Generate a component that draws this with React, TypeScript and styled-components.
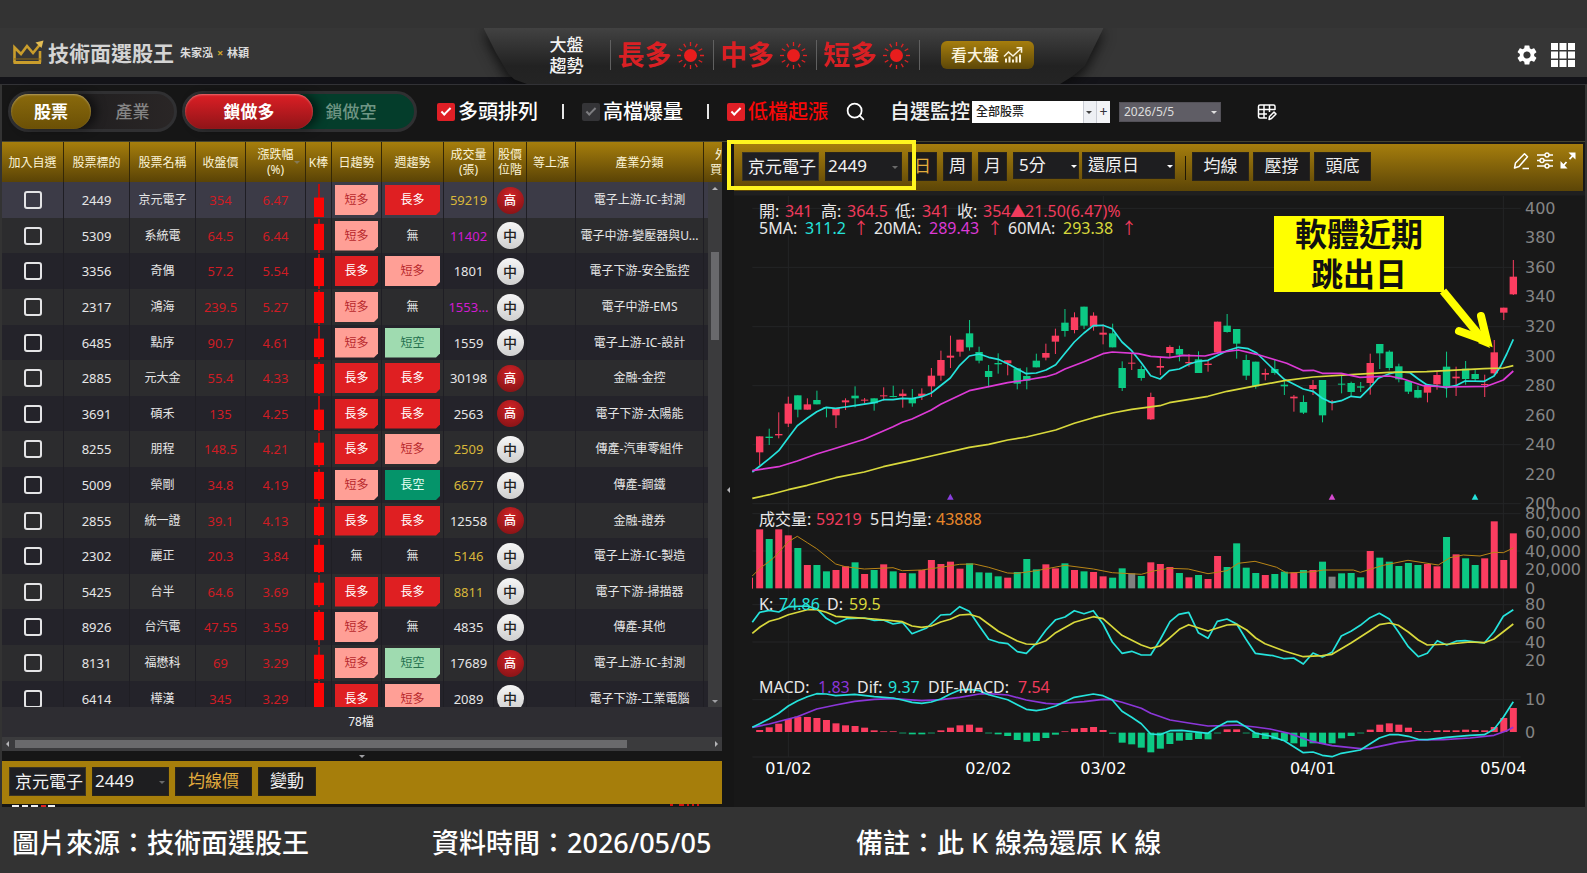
import React from "react";
import styled, { createGlobalStyle, css } from "styled-components";
import { MdSettings } from "react-icons/md";
import { Search } from "lucide-react";

const sans = `"Noto Sans", "Noto Sans CJK TC", sans-serif`;

const GlobalStyle = createGlobalStyle`
  *, *::before, *::after { box-sizing: border-box; }
  body {
    margin: 0;
    background: #333333;
    color: #f2f2f2;
    font-family: ${sans};
    font-size: 13px;
    line-height: 18px;
  }
  button, input, select { font-family: inherit; color: inherit; margin: 0; }
  button { cursor: pointer; }
`;

/* ---------- shell ---------- */

const Page = styled.div`
  padding-top: 28px;
`;

const Frame = styled.div`
  margin: 0 2px;
  background: #161616;
`;

const Header = styled.header`
  display: grid;
  grid-template-columns: 1fr auto 1fr;
  height: 56px;
  margin: 0 -2px;
  overflow: hidden;
  background: linear-gradient(#363636 49px, #131318 49px);
`;

const Brand = styled.div`
  display: flex;
  align-items: center;
  height: 49px;
  padding-left: 12px;
`;

const BrandTitle = styled.h1`
  margin: 0 6px 0 4px;
  font-size: 21px;
  line-height: 28px;
  font-weight: 700;
  color: #d4d4d4;
`;

const Authors = styled.span`
  font-size: 11px;
  font-weight: 700;
  color: #dcdcdc;
  i { font-style: normal; color: #cfa52a; padding: 0 1px; }
`;

const TabShadow = styled.div`
  filter: drop-shadow(0 4px 7px #0c0c0c);
`;

const MarketTab = styled.section`
  display: flex;
  align-items: center;
  width: 620px;
  height: 56px;
  padding: 0 0 2px 66px;
  background: linear-gradient(#424242, #222222 38px, #242424);
  clip-path: polygon(0 0, 100% 0, 97% 68%, 95% 86%, 93% 100%, 7% 100%, 5% 92%, 4% 82%, 2% 44%);
`;

const MarketLabel = styled.div`
  width: 60px;
  font-size: 17px;
  line-height: 21px;
  font-weight: 500;
  white-space: pre-line;
`;

const Trend = styled.div`
  display: flex;
  align-items: center;
  gap: 4px;
  width: 103px;
  height: 30px;
  padding-left: 7px;
  border-left: 1px solid #606060;
  font-size: 27px;
  line-height: 30px;
  font-weight: 700;
  color: #d92024;
`;

const TrendEnd = styled.div`
  width: 22px;
  height: 30px;
  border-left: 1px solid #606060;
`;

const MarketButton = styled.button`
  display: flex;
  align-items: center;
  justify-content: center;
  gap: 4px;
  width: 93px;
  height: 28px;
  padding: 0;
  border: 0;
  border-radius: 6px;
  background: linear-gradient(#a67e0d, #5d4708);
  color: #faf3dc;
  font-size: 16px;
  line-height: 24px;
  font-weight: 500;
`;

const HeaderTools = styled.div`
  display: flex;
  align-items: center;
  justify-content: flex-end;
  gap: 12px;
  height: 53px;
  padding-right: 12px;
`;

const IconButton = styled.button`
  display: flex;
  padding: 0;
  border: 0;
  background: none;
  color: #ffffff;
`;

/* ---------- filter bar ---------- */

const FilterBar = styled.div`
  display: flex;
  align-items: center;
  height: 58px;
  padding: 0 6px 3px;
  border-top: 1px solid #323236;
  border-bottom: 1px solid #45442f;
`;

const Toggle = styled.div<{ $bg: string; $w: number; $gap: number }>`
  display: flex;
  flex: none;
  width: ${(p) => p.$w}px;
  height: 41px;
  margin-right: ${(p) => p.$gap}px;
  padding: 0;
  border: 3px solid #303032;
  border-radius: 21px;
  background: ${(p) => p.$bg};
`;

const ToggleItem = styled.button<{ $w?: number; $fill?: string; $fg: string }>`
  flex: ${(p) => (p.$w ? `0 0 ${p.$w}px` : "1")};
  height: 35px;
  padding: 0;
  border: 0;
  border-radius: 18px;
  background: ${(p) => p.$fill ?? "none"};
  color: ${(p) => p.$fg};
  font-size: 17px;
  line-height: 24px;
  font-weight: ${(p) => (p.$fill ? 700 : 500)};
  ${(p) => p.$fill && css`box-shadow: inset 0 1px 2px rgba(255, 255, 255, 0.35), 6px 0 10px rgba(0, 0, 0, 0.5);`}
`;

const Check = styled.label<{ $color?: string }>`
  display: flex;
  align-items: center;
  gap: 3px;
  font-size: 20px;
  line-height: 28px;
  font-weight: 500;
  white-space: nowrap;
  color: ${(p) => p.$color ?? "#ffffff"};
`;

const CheckInput = styled.input`
  appearance: none;
  display: grid;
  place-items: center;
  width: 18px;
  height: 18px;
  border-radius: 2px;
  background: #343437;
  &:checked { background: #e01f26; }
  &::before {
    content: "";
    width: 10px;
    height: 5px;
    border: solid #7d7d80;
    border-width: 0 0 2px 2px;
    transform: translateY(-1px) rotate(-45deg);
  }
  &:checked::before { border-color: #ffffff; }
`;

const Bar = styled.span`
  width: 2px;
  height: 15px;
  margin: 0 18px 0 24px;
  background: #e6e6e6;
`;

const SearchButton = styled(IconButton)`
  margin: 0 24px 0 17px;
`;

const Watch = styled.label`
  font-size: 20px;
  line-height: 28px;
  font-weight: 500;
  white-space: nowrap;
`;

const WatchBox = styled.div`
  display: flex;
  width: 138px;
  height: 22px;
  margin: 0 9px 0 2px;
  background: #ffffff;
  color: #222222;
`;

const SelectWrap = styled.div<{ $w?: number; $h?: number; $arrow?: string; $right?: number }>`
  position: relative;
  display: flex;
  flex: ${(p) => (p.$w ? `0 0 ${p.$w}px` : "1")};
  height: ${(p) => p.$h ?? 22}px;
  &::after {
    content: "";
    position: absolute;
    right: ${(p) => p.$right ?? 4}px;
    top: 50%;
    margin-top: -1px;
    border: 3px solid transparent;
    border-top-color: ${(p) => p.$arrow ?? "#444444"};
    border-bottom: 0;
    pointer-events: none;
  }
`;

const PlainSelect = styled.select`
  appearance: none;
  width: 100%;
  height: 100%;
  padding: 0 14px 0 4px;
  border: 0;
  border-radius: 0;
  background: #ffffff linear-gradient(90deg, #c9ccd4 1px, #eef0f4 1px) right / 13px 100% no-repeat;
  font-size: 12px;
  font-weight: 500;
`;

const DateSelect = styled.select`
  appearance: none;
  width: 100%;
  height: 100%;
  padding: 0 14px 0 4px;
  border: 1px solid #535158;
  border-radius: 0;
  background: #5f5d65;
  color: #dddddd;
  font-size: 12px;
`;

const AddButton = styled.button`
  width: 14px;
  padding: 0;
  border: 0;
  border-left: 1px solid #c9ccd4;
  background: #f3f4f7;
  color: #33333b;
  font-size: 14px;
  line-height: 18px;
`;

const ColumnsButton = styled(IconButton)`
  margin-left: 36px;
`;

/* ---------- two panels ---------- */

const Panels = styled.main`
  display: grid;
  grid-template-columns: minmax(0, 720fr) 12px minmax(0, 851fr);
`;

const ListPanel = styled.section`
  display: flex;
  flex-direction: column;
  min-height: 0;
`;

const TableView = styled.div`
  position: relative;
  flex: 1 1 0;
  min-height: 200px;
  overflow: hidden;
`;

const StockTable = styled.table`
  width: 100%;
  table-layout: fixed;
  border-collapse: separate;
  border-spacing: 0;
`;

const Col = styled.col<{ $w?: number }>`
  width: ${(p) => (p.$w ? `${p.$w}px` : "auto")};
`;

const Th = styled.th<{ $clip?: boolean }>`
  position: relative;
  height: 40px;
  padding: 0;
  overflow: hidden;
  background: linear-gradient(#a67e0c, #5a4306);
  border-right: 1px solid #352806;
  color: #fbf3d6;
  font-size: 12px;
  line-height: 15px;
  font-weight: 400;
  white-space: pre-line;
  ${(p) => p.$clip && css`
    padding-left: 6px;
    border-right: 0;
    text-align: left;
    text-indent: 5px;
    text-overflow: clip;
  `}
`;

const SortMark = styled.span`
  position: absolute;
  right: 5px;
  top: 19px;
  border: 3px solid transparent;
  border-top-color: #857a58;
`;

const Row = styled.tr<{ $selected?: boolean }>`
  height: 36px;
  background: ${(p) => (p.$selected ? "#3c3b47" : "#24232a")};
  &:nth-child(even) { background: #2c2c2e; }
  &:nth-child(5n), &:nth-child(5n + 2) { height: 35px; }
`;

const Td = styled.td<{ $color?: string; $cjk?: boolean; $flush?: boolean }>`
  padding: 0;
  overflow: hidden;
  border-right: 1px solid ${(p) => (p.$flush ? "transparent" : "#1f1e24")};
  color: ${(p) => p.$color ?? "#e6e6e6"};
  font-size: ${(p) => (p.$cjk ? 12 : 13)}px;
  line-height: 18px;
  text-align: center;
  text-overflow: ellipsis;
  white-space: nowrap;
`;

const PickBox = styled.input`
  appearance: none;
  display: block;
  width: 18px;
  height: 18px;
  margin: 0 auto;
  border: 2px solid #e4e4e6;
  border-radius: 3px;
`;

const badgeTone: Record<string, [string, string]> = {
  長多: ["#df1f22", "#ffffff"],
  短多: ["#ff9f96", "#b8282c"],
  長空: ["#05946a", "#e6fff3"],
  短空: ["#9fdbb0", "#25704e"],
};

const Badge = styled.span<{ $kind: string; $w: number }>`
  display: block;
  width: ${(p) => p.$w}px;
  height: 30px;
  margin: 0 auto;
  background: ${(p) => badgeTone[p.$kind][0]};
  color: ${(p) => badgeTone[p.$kind][1]};
  font-size: 12px;
  line-height: 30px;
  clip-path: polygon(0 0, 100% 0, 100% 26px, calc(100% - 4px) 100%, 0 100%);
`;

const Level = styled.span<{ $high: boolean }>`
  display: block;
  width: 27px;
  height: 27px;
  margin: 0 auto;
  border-radius: 50%;
  background: ${(p) =>
    p.$high
      ? "radial-gradient(circle at 50% 30%, #d02226, #8c1417 80%)"
      : "linear-gradient(#f6f6f6, #cfcfcf)"};
  color: ${(p) => (p.$high ? "#ffffff" : "#222222")};
  font-size: ${(p) => (p.$high ? 12 : 14)}px;
  line-height: 27px;
  font-weight: 500;
`;

const VScroll = styled.div`
  position: absolute;
  top: 40px;
  right: 0;
  bottom: 0;
  display: flex;
  flex-direction: column;
  align-items: center;
  width: 14px;
  padding: 5px 0 4px;
  background: #3b3b3d;
`;

const VThumb = styled.div`
  width: 8px;
  height: 88px;
  margin: 62px 0 auto;
  background: #69696c;
`;

const Arrow = styled.span<{ $dir: "up" | "down" | "left" | "right" }>`
  flex: none;
  width: 0;
  height: 0;
  border: 3px solid transparent;
  ${(p) => p.$dir === "up" && css`border-top: 0; border-bottom-color: #b5b5b8;`}
  ${(p) => p.$dir === "down" && css`border-bottom: 0; border-top-color: #a0a0a4;`}
  ${(p) => p.$dir === "left" && css`border-left: 0; border-right-color: #b5b5b8;`}
  ${(p) => p.$dir === "right" && css`border-right: 0; border-left-color: #b5b5b8;`}
`;

const Count = styled.div`
  height: 30px;
  padding-right: 2px;
  background: #2e2d32;
  font-size: 12px;
  line-height: 30px;
  text-align: center;
`;

const HScroll = styled.div`
  display: flex;
  align-items: center;
  height: 14px;
  padding: 0 4px;
  background: #3b3b3d;
`;

const HThumb = styled.div`
  width: 86%;
  height: 8px;
  margin: 0 auto 0 6px;
  background: #6a6a6c;
`;

const Collapse = styled.div`
  display: grid;
  place-items: center;
  height: 10px;
`;

const DetailBar = styled.div`
  display: flex;
  align-items: center;
  gap: 6px;
  height: 43px;
  padding: 0 7px 2px;
  background: #a67e0b;
`;

const Peek = styled.div`
  display: flex;
  justify-content: space-between;
  height: 3px;
  padding: 0 22px 0 8px;
`;

const Splitter = styled.div`
  display: grid;
  place-items: center;
  padding-top: 30px;
`;

/* ---------- chart panel ---------- */

const ChartPanel = styled.section`
  min-width: 0;
  padding-top: 2px;
  background: #181818;
`;

const ChartBar = styled.div`
  display: flex;
  align-items: flex-start;
  gap: 6px;
  height: 47px;
  margin-right: 2px;
  padding: 8px 7px 0 8px;
  background: linear-gradient(#a67e0d, #5c4507);
`;

const Symbol = styled.div`
  position: relative;
  display: flex;
  gap: 6px;
`;

const Highlight = styled.div`
  position: absolute;
  inset: -12px -14px -9px -15px;
  border: 4px solid #fff51f;
  pointer-events: none;
`;

const NameInput = styled.input`
  width: 77px;
  height: 29px;
  padding: 0 0 2px 5px;
  border: 1px solid #3a3424;
  background: #1f1f22;
  font-size: 17px;
  line-height: 24px;
`;

const DarkSelect = styled.select<{ $pad?: number }>`
  appearance: none;
  width: 100%;
  height: 100%;
  padding: 0 14px 1px ${(p) => p.$pad ?? 6}px;
  border: 1px solid #29241a;
  border-radius: 0;
  background: #1e1e20;
  font-size: 17px;
  line-height: 24px;
`;

const ToolButton = styled.button<{ $w: number; $on?: boolean }>`
  width: ${(p) => p.$w}px;
  height: 29px;
  padding: 0 0 1px;
  border: 1px solid #29241a;
  background: #1c1b1c;
  color: ${(p) => (p.$on ? "#e2ac3c" : "#ececec")};
  font-size: 17px;
  line-height: 24px;
`;

const SelectPair = styled.div`
  display: flex;
  gap: 3px;
`;

const ToolSet = styled.div`
  display: flex;
  gap: 4px;
  padding-left: 7px;
  margin-left: 4px;
  background: linear-gradient(#201804, #201804) 0 4px / 1px 24px no-repeat;
`;

const ChartIcons = styled.div`
  display: flex;
  gap: 7px;
  margin-left: auto;
`;

const ChartSvg = styled.svg`
  display: block;
  width: 100%;
  height: auto;
`;

const AxisText = styled.text`
  font-family: "DejaVu Sans", sans-serif;
  font-size: 16px;
  fill: #858585;
`;

const DateText = styled(AxisText)`
  fill: #ffffff;
  text-anchor: middle;
`;

const LegendText = styled.text`
  font-family: ${sans};
  font-size: 16px;
`;

const CalloutText = styled.text`
  font-family: ${sans};
  font-size: 32px;
  font-weight: 700;
  text-anchor: middle;
  fill: #111111;
`;

const Caption = styled.footer`
  display: grid;
  grid-template-columns: 420fr 424fr 719fr;
  height: 66px;
  padding: 19px 12px 0;
  font-size: 27px;
  line-height: 34px;
  font-weight: 500;
  color: #ffffff;
  white-space: nowrap;
`;

/* ---------- icons ---------- */

const Crown = () => (
  <svg width="32" height="26" viewBox="0 0 32 26" fill="none" stroke="#c99d2c" strokeWidth="2.600">
    <path d="M2.5 22.5V7.500l6.500 6.500 6-8 6 7L28 4.500M28 11v11.500" />
    <path d="M2 19h27" strokeWidth="1" stroke="#8c6a16" />
    <path d="M23.500 2.500l8-2-2 7.500z" fill="#e3bd55" stroke="none" />
    <path d="M1.500 22.500h27.500" strokeWidth="3" />
  </svg>
);

const Sun = () => (
  <svg width="29" height="29" viewBox="-14.5 -14.5 29 29">
    <circle r="6.500" fill="#e81d1d" />
    {Array.from({ length: 12 }, (_, i) => (
      <path key={i} d="M0 -9.500V-13.500" stroke="#e02222" strokeWidth="1.300" transform={`rotate(${i * 30})`} />
    ))}
  </svg>
);

const TrendIcon = () => (
  <svg width="20" height="18" viewBox="0 0 20 18" fill="none" stroke="currentColor" strokeWidth="1.600">
    <path d="M1 10.500l4.500-4.500 4.500 4 7.500-7M13.500 1.800h5v5" />
    <path d="M3 16.500v-4M6.500 16.500v-6M10 16.500v-3M13.500 16.500v-6M17 16.500v-8" strokeWidth="2" />
  </svg>
);

const AppsIcon = () => (
  <svg width="24" height="24" viewBox="0 0 24 24" fill="currentColor">
    {[0, 1, 2].map((r) => [0, 1, 2].map((c) => <rect key={`${r}${c}`} x={c * 8.5} y={r * 8.5} width="7" height="7" />))}
  </svg>
);

const TableEditIcon = () => (
  <svg width="20" height="18" viewBox="0 0 20 18" fill="none" stroke="currentColor" strokeWidth="1.500" strokeLinejoin="round">
    <path d="M18 7V3.500a1.500 1.500 0 0 0-1.500-1.500H3a1.500 1.500 0 0 0-1.500 1.500v10A1.500 1.500 0 0 0 3 15h7M1.500 6.500H18M7 2v13M12.500 2v7M1.500 11H10" />
    <path d="M12 16.500l.5-3 4.500-4.500 2 2-4.500 4.500z" />
  </svg>
);

const PencilIcon = () => (
  <svg width="17" height="18" viewBox="0 0 17 18" fill="none" stroke="currentColor" strokeWidth="1.500" strokeLinejoin="round">
    <path d="M1.500 16l1-5L11.500 1.800l3 3L6 14.500z" />
    <path d="M9.500 16.500H16" />
  </svg>
);

const SlidersIcon = () => (
  <svg width="16" height="17" viewBox="0 0 16 17" fill="none" stroke="currentColor" strokeWidth="1.400">
    <path d="M0 3h8M12 3h4M0 8.500h3M7 8.500h9M0 14h8M12 14h4" />
    <circle cx="10" cy="3" r="2" />
    <circle cx="5" cy="8.500" r="2" />
    <circle cx="10" cy="14" r="2" />
  </svg>
);

const ExpandIcon = () => (
  <svg width="16" height="17" viewBox="0 0 16 17" fill="currentColor" stroke="currentColor">
    <path d="M8.500 0.500H15.500v7zM0.500 9V16.500h7z" stroke="none" />
    <path d="M13 3.500L9.500 7.200M6.500 10L3 13.800" strokeWidth="1.800" />
  </svg>
);

/* ---------- list data ---------- */

type Stock = {
  id: string; name: string; price: string; pct: string;
  bar: [number, number, number, number];
  day: string; week: string; vol: string; volColor?: string; level: string; sector: string;
};

const gold = "#d9b83a";
const violet = "#d21bd2";

const stocks: Stock[] = [
  { id: "2449", name: "京元電子", price: "354", pct: "6.47", bar: [1, 15, 35, 35], day: "短多", week: "長多", vol: "59219", volColor: gold, level: "高", sector: "電子上游-IC-封測" },
  { id: "5309", name: "系統電", price: "64.5", pct: "6.44", bar: [1, 6, 33, 36], day: "短多", week: "無", vol: "11402", volColor: violet, level: "中", sector: "電子中游-變壓器與U..." },
  { id: "3356", name: "奇偶", price: "57.2", pct: "5.54", bar: [0, 4, 33, 36], day: "長多", week: "短多", vol: "1801", level: "中", sector: "電子下游-安全監控" },
  { id: "2317", name: "鴻海", price: "239.5", pct: "5.27", bar: [0, 2, 34, 36], day: "短多", week: "無", vol: "1553...", volColor: violet, level: "中", sector: "電子中游-EMS" },
  { id: "6485", name: "點序", price: "90.7", pct: "4.61", bar: [1, 14, 33, 35], day: "短多", week: "短空", vol: "1559", level: "中", sector: "電子上游-IC-設計" },
  { id: "2885", name: "元大金", price: "55.4", pct: "4.33", bar: [1, 3, 33, 34], day: "長多", week: "長多", vol: "30198", level: "高", sector: "金融-金控" },
  { id: "3691", name: "碩禾", price: "135", pct: "4.25", bar: [0, 14, 35, 36], day: "長多", week: "長多", vol: "2563", level: "高", sector: "電子下游-太陽能" },
  { id: "8255", name: "朋程", price: "148.5", pct: "4.21", bar: [1, 11, 34, 36], day: "長多", week: "短多", vol: "2509", volColor: gold, level: "中", sector: "傳產-汽車零組件" },
  { id: "5009", name: "榮剛", price: "34.8", pct: "4.19", bar: [1, 4, 32, 34], day: "短多", week: "長空", vol: "6677", volColor: gold, level: "中", sector: "傳產-鋼鐵" },
  { id: "2855", name: "統一證", price: "39.1", pct: "4.13", bar: [0, 4, 33, 34], day: "長多", week: "長多", vol: "12558", level: "高", sector: "金融-證券" },
  { id: "2302", name: "麗正", price: "20.3", pct: "3.84", bar: [0, 6, 34, 35], day: "無", week: "無", vol: "5146", volColor: gold, level: "中", sector: "電子上游-IC-製造" },
  { id: "5425", name: "台半", price: "64.6", pct: "3.69", bar: [1, 9, 32, 34], day: "長多", week: "長多", vol: "8811", volColor: gold, level: "中", sector: "電子下游-掃描器" },
  { id: "8926", name: "台汽電", price: "47.55", pct: "3.59", bar: [0, 2, 31, 36], day: "短多", week: "無", vol: "4835", level: "中", sector: "傳產-其他" },
  { id: "8131", name: "福懋科", price: "69", pct: "3.29", bar: [1, 9, 34, 35], day: "短多", week: "短空", vol: "17689", level: "高", sector: "電子上游-IC-封測" },
  { id: "6414", name: "樺漢", price: "345", pct: "3.29", bar: [0, 2, 35, 36], day: "長多", week: "短多", vol: "2089", level: "中", sector: "電子下游-工業電腦" },
];

const columns: { label: string; w?: number }[] = [
  { label: "加入自選", w: 62 },
  { label: "股票標的", w: 66 },
  { label: "股票名稱", w: 66 },
  { label: "收盤價", w: 50 },
  { label: "漲跌幅\n(%)", w: 60 },
  { label: "K棒", w: 26 },
  { label: "日趨勢", w: 50 },
  { label: "週趨勢", w: 62 },
  { label: "成交量\n(張)", w: 50 },
  { label: "股價\n位階", w: 33 },
  { label: "等上漲", w: 49 },
  { label: "產業分類" },
  { label: "外\n買", w: 18 },
];

const Block = styled.svg`
  display: block;
  margin: 0 auto;
`;

const KBar = ({ v }: { v: Stock["bar"] }) => (
  <Block width="12" height="35" viewBox="0 0 12 36" preserveAspectRatio="none" fill="#fb0505">
    <rect x="5" y={v[0]} width="2" height={v[3] - v[0]} fill="#c00a0a" />
    <rect x="1" y={v[1]} width="10" height={v[2] - v[1]} />
  </Block>
);

const TrendCell = ({ kind, w }: { kind: string; w: number }) =>
  kind === "無" ? <>無</> : <Badge $kind={kind} $w={w}>{kind}</Badge>;

const red = "#cf1c24";

/* ---------- chart data ---------- */

// Plot units: three to a pixel, x and y measured from the plot origin.
const px = (x: number) => x / 3 + 6;
const top = (y: number) => (y - 33) / 3;
const low = (y: number) => y / 3 + 299;
const slot = (i: number) => px(59 + 28.62 * i);

const UP = "#fb3d60";
const DOWN = "#0cc984";

// up/down flag, body top, body bottom, high, low
const candles: [number, number, number, number, number][] = [
  [1, 769, 817, 769, 855], [0, 770, 774, 746, 795], [1, 762, 766, 697, 775], [1, 671, 731, 650, 741],
  [0, 646, 689, 646, 712], [1, 673, 689, 655, 689], [0, 660, 673, 632, 673], [0, 682, 685, 682, 712],
  [1, 684, 706, 684, 744], [1, 661, 667, 655, 690], [0, 647, 655, 619, 682], [1, 659, 661, 654, 670],
  [0, 655, 670, 655, 692], [1, 646, 649, 622, 662], [0, 648, 650, 617, 652], [1, 641, 648, 628, 683],
  [0, 654, 670, 627, 680], [1, 641, 648, 625, 660], [1, 587, 619, 564, 651], [1, 540, 587, 512, 602],
  [1, 527, 533, 467, 564], [1, 479, 515, 479, 530], [0, 460, 502, 420, 512], [0, 516, 542, 500, 550],
  [0, 573, 591, 555, 622], [0, 549, 553, 520, 581], [1, 541, 550, 541, 586], [0, 565, 611, 565, 628],
  [0, 588, 602, 562, 628], [0, 542, 562, 521, 562], [1, 519, 533, 491, 541], [1, 467, 485, 446, 522],
  [0, 428, 453, 387, 470], [1, 412, 450, 397, 460], [0, 380, 437, 380, 447], [1, 407, 440, 397, 452],
  [1, 458, 464, 433, 493], [0, 460, 502, 431, 502], [0, 564, 624, 544, 633], [1, 548, 551, 520, 570],
  [0, 567, 594, 557, 602], [1, 651, 718, 638, 720], [1, 558, 563, 530, 585], [1, 501, 519, 496, 532],
  [0, 507, 524, 497, 544], [1, 546, 550, 522, 560], [0, 538, 579, 514, 579], [1, 551, 555, 540, 575],
  [1, 425, 517, 425, 520], [0, 437, 456, 402, 458], [0, 447, 491, 447, 536], [0, 540, 587, 524, 600],
  [0, 545, 619, 545, 626], [1, 579, 584, 566, 601], [0, 567, 579, 538, 584], [0, 614, 619, 598, 645],
  [1, 650, 655, 645, 695], [0, 666, 698, 646, 702], [1, 615, 627, 600, 645], [0, 600, 706, 600, 727],
  [1, 664, 668, 660, 691], [0, 611, 614, 586, 640], [0, 609, 636, 605, 650], [0, 619, 623, 606, 636],
  [1, 549, 609, 521, 644], [0, 492, 520, 492, 567], [0, 515, 564, 511, 571], [0, 559, 598, 551, 607],
  [0, 603, 635, 600, 642], [0, 630, 653, 617, 655], [1, 616, 638, 616, 667], [1, 585, 613, 575, 629],
  [0, 560, 618, 515, 653], [1, 590, 595, 560, 648], [0, 566, 597, 543, 614], [0, 582, 597, 570, 603],
  [1, 612, 614, 584, 651], [1, 517, 580, 480, 585], [1, 383, 398, 383, 420], [1, 290, 343, 240, 345],
];

const volumeTops = [
  118, 147, 118, 136, 174, 225, 225, 244, 240, 229, 217, 252, 240, 223, 244, 249, 250, 240, 210, 222,
  215, 236, 220, 247, 248, 259, 263, 246, 207, 238, 223, 235, 220, 240, 244, 246, 259, 263, 235, 250,
  258, 217, 222, 231, 249, 262, 255, 267, 198, 231, 160, 233, 249, 255, 252, 245, 247, 240, 240, 215,
  260, 250, 249, 262, 183, 203, 215, 228, 219, 225, 222, 229, 141, 193, 205, 225, 205, 94, 210, 130,
];

const histogram = [
  6, 14, 25, 39, 46, 45, 42, 36, 26, 20, 18, 13, 5, 2, 2, -2, -5, -5, -2, 5,
  13, 20, 22, 13, -2, -5, -10, -22, -27, -25, -16, -6, 2, 10, 12, 15, 6, -3, -30, -35,
  -45, -59, -48, -34, -24, -22, -19, -20, -2, 8, 8, -2, -16, -19, -20, -25, -32, -42, -32, -34,
  -32, -17, -10, -2, 7, 22, 26, 22, 13, 3, 2, 5, 5, 5, 7, 6, 5, 15, 42, 72,
];

const flatDays = [39, 60];

const volumeColor = (i: number) => (flatDays.includes(i) ? "#808080" : candles[i][0] ? UP : DOWN);

const ma5 = "37,876 88,836 116,812 145,773 172,737 202,715 230,695 259,682 287,685 316,681 344,677 403,668 430,659 459,659 487,655 516,656 545,650 574,639 631,594 659,556 688,528 718,522 746,532 775,538 803,551 832,567 859,581 889,579 918,570 947,554 975,520 1003,486 1032,459 1060,437 1089,436 1117,446 1146,486 1175,512 1204,548 1232,587 1260,597 1288,572 1318,567 1346,553 1375,544 1404,541 1461,512 1495,502 1525,506 1550,519 1590,558 1633,598 1690,627 1719,634 1747,655 1776,668 1804,662 1833,649 1861,652 1890,623 1915,595 1948,581 1975,575 2010,578 2035,597 2060,614 2090,618 2118,623 2150,616 2175,603 2233,604 2262,588 2280,562 2300,522 2320,478";
const ma20 = "37,872 116,860 172,843 230,822 287,805 373,778 459,740 487,727 516,717 574,690 602,673 688,632 746,620 803,608 859,600 918,590 947,581 975,567 1032,545 1089,521 1117,516 1195,521 1232,529 1288,533 1330,526 1395,528 1440,517 1495,510 1550,523 1595,536 1640,550 1690,572 1720,571 1747,580 1804,580 1860,592 1948,588 1990,597 2050,617 2120,621 2240,619 2290,600 2320,573";
const ma60 = "37,955 88,944 145,929 202,916 287,893 373,876 430,860 516,841 574,828 688,802 746,793 803,780 859,771 947,750 1003,730 1060,713 1117,699 1175,688 1260,677 1288,668 1404,649 1461,634 1550,617 1633,602 1719,591 1833,584 1948,577 2060,575 2233,566 2290,564 2320,557";
const volMa = "37,258 60,235 100,205 145,155 172,139 202,158 230,176 287,222 316,230 373,237 459,233 487,242 545,240 602,232 659,223 703,222 746,232 803,249 832,250 889,242 975,226 1060,237 1117,248 1204,253 1240,243 1288,235 1345,237 1404,251 1461,242 1495,220 1545,214 1610,232 1640,249 1720,245 1750,240 1840,240 1861,247 1930,226 2004,211 2095,225 2130,203 2170,195 2220,198 2262,187 2290,188 2320,174";
const kLine = "37,397 59,367 88,361 116,366 145,350 202,348 230,356 259,385 287,401 320,386 373,384 403,391 430,390 459,402 487,397 516,431 560,414 602,375 631,373 659,350 688,364 718,408 746,448 775,457 803,461 832,485 859,490 889,460 918,420 947,389 975,381 1003,362 1032,371 1060,362 1089,402 1117,456 1146,490 1175,484 1204,495 1232,495 1260,450 1290,395 1316,373 1346,367 1375,428 1404,445 1432,394 1461,387 1490,402 1518,448 1546,490 1600,497 1633,506 1661,504 1690,522 1719,489 1747,501 1776,487 1804,438 1833,424 1861,406 1890,383 1918,370 1948,387 1975,425 2005,470 2035,500 2062,490 2092,452 2120,465 2150,453 2175,452 2233,459 2262,425 2290,379 2320,359";
const dLine = "37,430 60,411 88,394 116,386 145,374 202,359 230,359 259,367 287,379 344,383 403,387 487,395 516,408 545,412 574,408 602,396 631,388 659,375 688,373 718,382 775,424 832,453 859,462 889,463 918,452 947,428 1003,397 1060,380 1089,386 1146,436 1204,465 1232,475 1260,468 1290,443 1318,418 1346,404 1404,423 1461,405 1490,403 1520,420 1547,444 1575,461 1633,483 1690,500 1747,497 1776,493 1833,459 1918,404 1948,399 1975,406 2005,426 2035,450 2062,465 2130,462 2190,456 2233,458 2262,447 2320,402";
const dif = "37,712 59,701 88,686 116,670 145,648 172,633 202,620 230,611 259,612 287,617 344,613 403,620 459,624 487,630 516,637 545,640 574,636 602,627 631,612 659,600 688,598 718,602 746,614 803,629 832,644 859,658 889,662 918,657 947,648 1003,622 1060,612 1089,617 1117,630 1146,664 1175,682 1204,701 1232,732 1260,734 1290,722 1325,721 1404,730 1432,711 1461,695 1490,694 1520,712 1546,729 1590,738 1633,752 1690,788 1719,786 1747,796 1776,800 1804,790 1861,780 1918,744 1948,734 1975,734 2005,739 2035,748 2062,749 2120,742 2190,736 2233,734 2262,718 2290,682 2320,635";
const macd = "37,712 88,702 145,687 172,680 230,657 287,645 344,634 403,628 459,626 545,632 602,629 659,622 718,612 746,611 803,615 859,630 918,640 947,642 1032,635 1089,628 1117,629 1146,637 1204,655 1232,670 1290,690 1346,699 1404,708 1450,707 1490,705 1546,711 1590,717 1650,731 1719,755 1776,767 1861,776 1890,775 1975,757 2035,750 2110,749 2190,744 2262,736 2300,722 2320,712";

const trace = (points: string, y: (v: number) => number) =>
  points
    .split(" ")
    .map((p) => p.split(",").map(Number))
    .map(([a, b]) => `${px(a).toFixed(1)},${y(b).toFixed(1)}`)
    .join(" ");

const Line = ({ points, y, color, w = 1.7 }: { points: string; y: (v: number) => number; color: string; w?: number }) => (
  <polyline points={trace(points, y)} fill="none" stroke={color} strokeWidth={w} strokeLinejoin="round" />
);

const cyan = "#25e3dc";
const pink = "#dd3ad6";
const yellow = "#d8d83c";
const purple = "#8b36d8";
const white = "#e8e8e8";
const rose = "#f03b5c";

// y, then x / text / colour for each piece
const legends: { y: number; parts: [number, string, string][] }[] = [
  { y: 26, parts: [[25, "開:", white], [51, "341", rose], [87, "高:", white], [113, "364.5", rose], [161, "低:", white], [188, "341", rose], [223, "收:", white], [249, "354", rose], [276, "▲", rose], [291, "21.50(6.47)%", rose]] },
  { y: 43, parts: [[25, "5MA:", white], [71, "311.2", cyan], [119, "↑", rose], [140, "20MA:", white], [195, "289.43", pink], [253, "↑", rose], [274, "60MA:", white], [329, "293.38", yellow], [387, "↑", rose]] },
  { y: 334, parts: [[25, "成交量:", white], [82, "59219", rose], [136, "5日均量:", white], [202, "43888", "#e8872a"]] },
  { y: 419, parts: [[25, "K:", white], [45, "74.86", cyan], [93, "D:", white], [115, "59.5", yellow]] },
  { y: 502, parts: [[25, "MACD:", white], [84, "1.83", purple], [123, "Dif:", white], [154, "9.37", cyan], [194, "DIF-MACD:", white], [284, "7.54", rose]] },
];

const axis: [number, string][] = [
  ...Array.from({ length: 11 }, (_, i): [number, string] => [top(85 + i * 88.6), String(400 - i * 20)]),
  ...["80,000", "60,000", "40,000", "20,000", "0"].map((t, i): [number, string] => [low(71 + i * 56.2), t]),
  ...["80", "60", "40", "20"].map((t, i): [number, string] => [low(344 + i * 56), t]),
  [low(629), "10"],
  [low(728), "0"],
];

const dates: [number, string][] = [[145, "01/02"], [745, "02/02"], [1090, "03/02"], [1719, "04/01"], [2290, "05/04"]];

const signals: [number, string][] = [[631, "#8a3fe0"], [1776, "#d64ad0"], [2205, cyan]];

function Chart() {
  const gridY = [85, 262, 440, 617, 794, 971].map(top).concat([71, 183, 344, 456, 629, 801].map(low));
  return (
    <ChartSvg viewBox="0 0 851 616" role="img" aria-label="京元電子 K 線圖">
      <path d="M0 2H851" stroke="#1f1f20" strokeWidth="5" />
      <g stroke="#242526" strokeWidth="1">
        {gridY.map((y) => <path key={y} d={`M${px(37)} ${y}H${px(2342)}`} />)}
        {[145, 1090, 2290].map((x) => <path key={x} d={`M${px(x)} 5V${low(801)}`} />)}
      </g>
      {axis.map(([y, t]) => <AxisText key={`${y}${t}`} x="791" y={y + 5.5}>{t}</AxisText>)}
      {dates.map(([x, t]) => <DateText key={t} x={px(x)} y="583">{t}</DateText>)}

      {candles.map(([up, a, b, h, l], i) => (
        <g key={i} fill={up ? UP : DOWN}>
          <rect x={slot(i) - 0.5} y={top(h)} width="1" height={(l - h) / 3} />
          <rect x={slot(i) - 3.7} y={top(a)} width="7.400" height={Math.max(1, (b - a) / 3)} />
        </g>
      ))}
      <Line points={ma5} y={top} color={cyan} />
      <Line points={ma60} y={top} color={yellow} />
      <Line points={ma20} y={top} color={pink} />
      {signals.map(([x, c]) => (
        <path key={x} d={`M${px(x)} ${top(941)}l3.300 6h-6.600z`} fill={c} />
      ))}

      <rect x={px(36)} y={low(263)} width="1" height="11" fill={UP} />
      {volumeTops.map((v, i) => (
        <rect key={i} x={slot(i) - 3.5} y={low(v)} width="7" height={(295 - v) / 3} fill={volumeColor(i)} />
      ))}
      <Line points={volMa} y={low} color="#b98516" w={1} />

      {histogram.map((v, i) => (
        <rect
          key={i}
          x={slot(i) - 3.5}
          y={v > 0 ? low(726 - v) : low(728)}
          width="7"
          height={Math.max(0.7, Math.abs(v) / 3)}
          fill={v > 0 ? UP : DOWN}
        />
      ))}
      <Line points={macd} y={low} color={purple} />
      <Line points={dif} y={low} color={cyan} />
      <Line points={kLine} y={low} color={cyan} />
      <Line points={dLine} y={low} color={yellow} />

      {legends.map((row) => (
        <LegendText key={row.y} y={row.y}>
          {row.parts.map(([x, t, c]) => <tspan key={x} x={x} fill={c}>{t}</tspan>)}
        </LegendText>
      ))}

      <rect x="540" y="25" width="170" height="76" fill="#ffff00" />
      <CalloutText x="625" y="55">軟體近期</CalloutText>
      <CalloutText x="625" y="95">跳出日</CalloutText>
      <path d="M709 100L750 150" stroke="#ffff00" strokeWidth="8" />
      <path d="M747 125L753 150L725 140" fill="none" stroke="#ffff00" strokeWidth="8" strokeLinecap="round" />
      <path d="M756 157L744 152L752 144z" fill="#ffff00" />
    </ChartSvg>
  );
}

/* ---------- app ---------- */

export default function App() {
  return (
    <>
      <GlobalStyle />
      <Page>
        <Frame>
          <Header>
            <Brand>
              <Crown />
              <BrandTitle>技術面選股王</BrandTitle>
              <Authors>朱家泓 <i>×</i> 林穎</Authors>
            </Brand>
            <TabShadow>
              <MarketTab>
                <MarketLabel>{"大盤\n趨勢"}</MarketLabel>
                {["長多", "中多", "短多"].map((t) => (
                  <Trend key={t}>{t}<Sun /></Trend>
                ))}
                <TrendEnd />
                <MarketButton>看大盤<TrendIcon /></MarketButton>
              </MarketTab>
            </TabShadow>
            <HeaderTools>
              <IconButton aria-label="設定"><MdSettings size={24} /></IconButton>
              <IconButton aria-label="功能選單"><AppsIcon /></IconButton>
            </HeaderTools>
          </Header>

          <FilterBar>
            <Toggle $bg="linear-gradient(90deg, #19191b, #2a2626)" $w={169} $gap={5}>
              <ToggleItem $w={80} $fill="linear-gradient(#8a6a0c, #6b5006)" $fg="#ffffff">股票</ToggleItem>
              <ToggleItem $fg="#858585">產業</ToggleItem>
            </Toggle>
            <Toggle $bg="#043d2b" $w={235} $gap={20}>
              <ToggleItem $w={128} $fill="linear-gradient(#dd1f25, #8f1418)" $fg="#ffffff">鎖做多</ToggleItem>
              <ToggleItem $w={76} $fg="#6f9584">鎖做空</ToggleItem>
            </Toggle>
            <Check><CheckInput type="checkbox" defaultChecked />多頭排列</Check>
            <Bar />
            <Check><CheckInput type="checkbox" />高檔爆量</Check>
            <Bar />
            <Check $color="#f80808"><CheckInput type="checkbox" defaultChecked />低檔起漲</Check>
            <SearchButton aria-label="搜尋"><Search size={21} strokeWidth={2} /></SearchButton>
            <Watch htmlFor="watch">自選監控</Watch>
            <WatchBox>
              <SelectWrap>
                <PlainSelect id="watch"><option>全部股票</option></PlainSelect>
              </SelectWrap>
              <AddButton aria-label="新增">+</AddButton>
            </WatchBox>
            <SelectWrap $w={102} $h={20} $arrow="#e0e0e0">
              <DateSelect aria-label="日期"><option>2026/5/5</option></DateSelect>
            </SelectWrap>
            <ColumnsButton aria-label="編輯欄位"><TableEditIcon /></ColumnsButton>
          </FilterBar>

          <Panels>
            <ListPanel>
              <TableView>
                <StockTable>
                  <colgroup>{columns.map((c) => <Col key={c.label} $w={c.w} />)}</colgroup>
                  <thead>
                    <tr>
                      {columns.map((c, i) => (
                        <Th key={c.label} scope="col" $clip={i === columns.length - 1}>
                          {c.label}
                          {i === 4 && <SortMark />}
                        </Th>
                      ))}
                    </tr>
                  </thead>
                  <tbody>
                    {stocks.map((s, i) => (
                      <Row key={s.id} $selected={i === 0}>
                        <Td><PickBox type="checkbox" aria-label={`加入自選 ${s.name}`} /></Td>
                        <Td>{s.id}</Td>
                        <Td $cjk>{s.name}</Td>
                        <Td $color={red}>{s.price}</Td>
                        <Td $color={red}>{s.pct}</Td>
                        <Td><KBar v={s.bar} /></Td>
                        <Td $cjk><TrendCell kind={s.day} w={43} /></Td>
                        <Td $cjk><TrendCell kind={s.week} w={55} /></Td>
                        <Td $color={s.volColor}>{s.vol}</Td>
                        <Td><Level $high={s.level === "高"}>{s.level}</Level></Td>
                        <Td />
                        <Td $cjk>{s.sector}</Td>
                        <Td $flush />
                      </Row>
                    ))}
                  </tbody>
                </StockTable>
                <VScroll>
                  <Arrow $dir="up" />
                  <VThumb />
                  <Arrow $dir="down" />
                </VScroll>
              </TableView>
              <Count>78檔</Count>
              <HScroll>
                <Arrow $dir="left" />
                <HThumb />
                <Arrow $dir="right" />
              </HScroll>
              <Collapse><Arrow $dir="down" /></Collapse>
              <DetailBar>
                <NameInput aria-label="股票名稱" defaultValue="京元電子" />
                <SelectWrap $w={77} $h={29} $arrow="#6a6a6a">
                  <DarkSelect aria-label="股票代號" $pad={2}><option>2449</option></DarkSelect>
                </SelectWrap>
                <ToolButton $w={77} $on>均線價</ToolButton>
                <ToolButton $w={58}>變動</ToolButton>
              </DetailBar>
              <Peek>
                <svg width="48" height="3" viewBox="0 0 48 3">
                  <path d="M2 2h7M12 2h6M21 2h7M38 2h7" stroke="#f0f0f0" strokeWidth="2" />
                  <path d="M31 2h5" stroke="#e02222" strokeWidth="2" />
                </svg>
                <svg width="30" height="3" viewBox="0 0 30 3">
                  <path d="M0 1h3M9 1h5M17 1h2M22 1h2M27 1h2" stroke="#d01010" strokeWidth="2" />
                </svg>
              </Peek>
            </ListPanel>

            <Splitter><Arrow $dir="left" /></Splitter>

            <ChartPanel>
              <ChartBar>
                <Symbol>
                  <NameInput aria-label="股票名稱" defaultValue="京元電子" />
                  <SelectWrap $w={77} $h={29} $arrow="#6a6a6a">
                    <DarkSelect aria-label="股票代號" $pad={2}><option>2449</option></DarkSelect>
                  </SelectWrap>
                  <Highlight />
                </Symbol>
                <ToolButton $w={29} $on>日</ToolButton>
                <ToolButton $w={29}>周</ToolButton>
                <ToolButton $w={29}>月</ToolButton>
                <SelectPair>
                  <SelectWrap $w={66} $h={27} $arrow="#ffffff" $right={2}>
                    <DarkSelect aria-label="分鐘" $pad={5}><option>5分</option></DarkSelect>
                  </SelectWrap>
                  <SelectWrap $w={93} $h={27} $arrow="#ffffff" $right={2}>
                    <DarkSelect aria-label="還原" $pad={5}><option>還原日</option></DarkSelect>
                  </SelectWrap>
                </SelectPair>
                <ToolSet>
                  <ToolButton $w={57}>均線</ToolButton>
                  <ToolButton $w={57}>壓撐</ToolButton>
                  <ToolButton $w={57}>頭底</ToolButton>
                </ToolSet>
                <ChartIcons>
                  <IconButton aria-label="畫線"><PencilIcon /></IconButton>
                  <IconButton aria-label="參數"><SlidersIcon /></IconButton>
                  <IconButton aria-label="放大"><ExpandIcon /></IconButton>
                </ChartIcons>
              </ChartBar>
              <Chart />
            </ChartPanel>
          </Panels>
        </Frame>
        <Caption>
          <span>圖片來源：技術面選股王</span>
          <span>資料時間：2026/05/05</span>
          <span>備註：此 K 線為還原 K 線</span>
        </Caption>
      </Page>
    </>
  );
}
